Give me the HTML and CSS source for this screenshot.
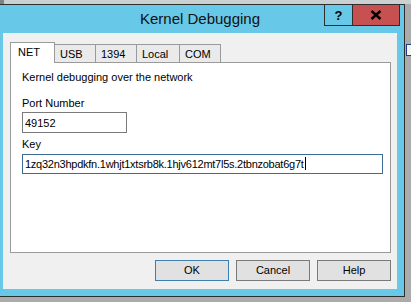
FILE: index.html
```html
<!DOCTYPE html>
<html lang="en-US">
<head>
    <meta charset="UTF-8">
    <title>Kernel Debugging</title>
    <link rel="stylesheet" href="styles.css">
</head>
<body>

<div class="topstrip"><span class="tick"></span></div>

<div class="desk">
    <div class="window">
        <div class="titlebar">
            <div class="title">Kernel Debugging</div>
            <div class="caption-buttons">
                <div class="cap help">?</div>
                <div class="cap close">
                    <svg width="12" height="10" viewBox="0 0 12 10">
                        <path d="M1.5 1 L10.5 9 M10.5 1 L1.5 9" stroke="#000" stroke-width="2.4" fill="none"/>
                    </svg>
                </div>
            </div>
        </div>

        <div class="client">
            <div class="tabs">
                <div class="tab selected">NET</div>
                <div class="tab">USB</div>
                <div class="tab">1394</div>
                <div class="tab">Local</div>
                <div class="tab">COM</div>
            </div>

            <div class="panel">
                <div class="desc">Kernel debugging over the network</div>
                <div class="label port-label">Port Number</div>
                <div class="field port">49152</div>
                <div class="label key-label">Key</div>
                <div class="field key focused">1zq32n3hpdkfn.1whjt1xtsrb8k.1hjv612mt7l5s.2tbnzobat6g7t<span class="caret"></span></div>
            </div>

            <div class="buttons">
                <div class="btn default">OK</div>
                <div class="btn">Cancel</div>
                <div class="btn">Help</div>
            </div>
        </div>
    </div>

    <div class="side"><span class="peek"></span></div>
</div>

</body>
</html>
```

FILE: styles.css
```css
body {
    margin: 0;
    width: 411px;
    height: 302px;
    overflow: hidden;
    background-color: #ababab;
    font-family: "Liberation Sans", Arial, sans-serif;
    font-size: 11px;
    color: #000;
}
.topstrip {
    height: 4px;
    background-color: #cbd0d1;
    display: flex;
}
.tick {
    width: 4px;
    height: 4px;
    background-color: #7d8283;
}
.desk {
    display: flex;
    align-items: flex-start;
}
.window {
    position: relative;
    width: 406px;
    height: 291px;
    background-color: #67c8e8;
    border: 1px solid #2e2e2e;
    border-left: none;
    display: flex;
    flex-direction: column;
}
.titlebar {
    height: 28px;
    display: flex;
    align-items: center;
    justify-content: center;
}
.title {
    font-size: 15px;
    color: #111;
    margin-top: -1px;
    margin-left: -4px;
}
.caption-buttons {
    position: absolute;
    top: -1px;
    right: 4px;
    display: flex;
    border: 1px solid #2e2e2e;
    height: 20px;
}
.cap {
    display: flex;
    align-items: center;
    justify-content: center;
    height: 20px;
}
.cap.help {
    width: 27px;
    border-right: 1px solid #2e2e2e;
    font-weight: bold;
    font-size: 13px;
}
.cap.close {
    width: 46px;
    background-color: #c75050;
}
.client {
    margin: 0 7px 0 3px;
    height: 256px;
    background-color: #f0f0f0;
    padding: 9px 6px 0 7px;
    box-sizing: border-box;
    display: flex;
    flex-direction: column;
}
.tabs {
    display: flex;
    align-items: flex-end;
    height: 20px;
}
.tab {
    height: 17px;
    background-color: #eaeaea;
    border-top: 1px solid #9a9a9a;
    border-right: 1px solid #9a9a9a;
    padding-left: 5px;
    line-height: 18px;
    box-sizing: content-box;
}
.tab:nth-child(2) { width: 35px; }
.tab:nth-child(3) { width: 35px; }
.tab:nth-child(4) { width: 37px; }
.tab:nth-child(5) { width: 35px; }
.tab.selected {
    position: relative;
    z-index: 1;
    height: 20px;
    width: 36px;
    margin-bottom: -1px;
    background-color: #fff;
    border-left: 1px solid #9a9a9a;
    padding-left: 7px;
    line-height: 18px;
}
.panel {
    height: 191px;
    background-color: #fff;
    border: 1px solid #9a9a9a;
    box-sizing: border-box;
    padding: 8px 0 0 11px;
    display: flex;
    flex-direction: column;
    align-items: flex-start;
}
.desc, .label {
    line-height: 13px;
}
.port-label {
    margin-top: 13px;
}
.key-label {
    margin-top: 5px;
}
.field {
    height: 19px;
    border: 1px solid #7a7a7a;
    padding-left: 2px;
    line-height: 20px;
    box-sizing: content-box;
    margin-top: 2px;
    white-space: nowrap;
}
.field.port {
    width: 101px;
}
.field.key {
    width: 357px;
    height: 18px;
    border-color: #3d6d95;
    letter-spacing: -0.25px;
    line-height: 19px;
    margin-top: 3px;
}
.caret {
    display: inline-block;
    width: 1px;
    height: 13px;
    background-color: #000;
    vertical-align: -2px;
    margin-left: 1px;
}
.buttons {
    display: flex;
    justify-content: flex-end;
    gap: 7px;
    margin-top: 7px;
}
.btn {
    width: 72px;
    height: 19px;
    background-color: #e1e1e1;
    border: 1px solid #7a7a7a;
    text-align: center;
    line-height: 19px;
    box-sizing: content-box;
}
.btn.default {
    border-color: #3c7fb1;
}
.side {
    display: flex;
    flex-direction: column;
    padding-top: 40px;
}
.peek {
    width: 4px;
    height: 10px;
    background-color: #f4f4f4;
    border: 1px solid #1d3f8c;
    border-right: none;
    margin-left: 1px;
}
```
